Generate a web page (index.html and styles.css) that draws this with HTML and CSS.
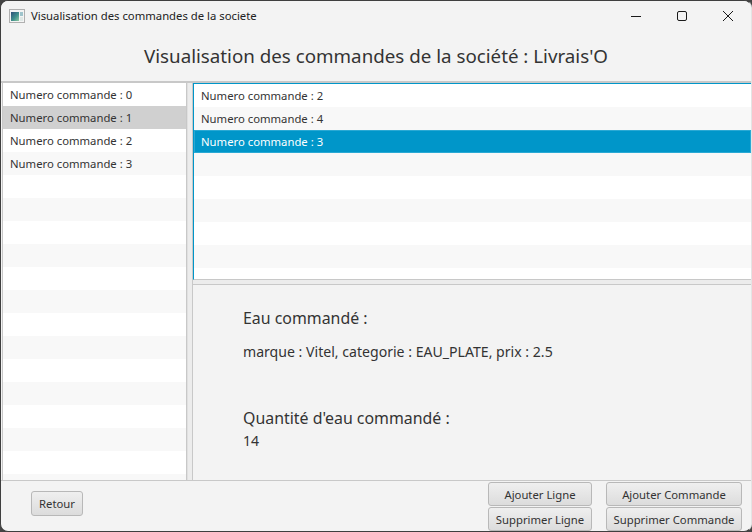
FILE: index.html
```html
<!DOCTYPE html>
<html>
<head>
    <link rel="stylesheet" href="styles.css">
</head>
<body>

<div class="window">
    <div class="titlebar">
        <svg class="app-icon" width="16" height="14" viewBox="0 0 16 14">
            <defs>
                <linearGradient id="iconFill" x1="0" y1="0" x2="1" y2="1">
                    <stop offset="0" stop-color="#2f4f78"/>
                    <stop offset="0.55" stop-color="#3f8f8c"/>
                    <stop offset="1" stop-color="#8fc9a0"/>
                </linearGradient>
            </defs>
            <rect x="0.5" y="0.5" width="15" height="13" fill="#f4f4f4" stroke="#b0b0b0"/>
            <rect x="2" y="3" width="8" height="9" fill="url(#iconFill)"/>
            <rect x="11" y="3" width="3" height="4" fill="#9fc4cc"/>
            <rect x="11" y="8" width="3" height="4" fill="#dfe8e6"/>
        </svg>
        <span class="window-title">Visualisation des commandes de la societe</span>
        <div class="window-buttons">
            <svg class="win-btn" width="46" height="30" viewBox="0 0 46 30"><path d="M18 15.5h10" stroke="#1a1a1a" fill="none"/></svg>
            <svg class="win-btn" width="46" height="30" viewBox="0 0 46 30"><rect x="18.5" y="10.5" width="9" height="9" rx="1.5" stroke="#1a1a1a" fill="none"/></svg>
            <svg class="win-btn" width="46" height="30" viewBox="0 0 46 30"><path d="M18 10l10 10M28 10l-10 10" stroke="#1a1a1a" fill="none"/></svg>
        </div>
    </div>

    <h1 class="heading">Visualisation des commandes de la société : Livrais'O</h1>

    <div class="main">
        <ul class="list list-left">
            <li>Numero commande : 0</li>
            <li class="selected-grey">Numero commande : 1</li>
            <li>Numero commande : 2</li>
            <li>Numero commande : 3</li>
            <li></li><li></li><li></li><li></li><li></li><li></li><li></li><li></li>
            <li></li><li></li><li></li><li></li><li></li><li></li>
        </ul>
        <div class="vsep"></div>
        <div class="right">
            <ul class="list list-right">
                <li>Numero commande : 2</li>
                <li>Numero commande : 4</li>
                <li class="selected-blue">Numero commande : 3</li>
                <li></li><li></li><li></li><li></li><li></li>
            </ul>
            <div class="hsep"></div>
            <div class="details">
                <p class="detail-title">Eau commandé :</p>
                <p class="detail-text">marque : Vitel, categorie : EAU_PLATE, prix : 2.5</p>
                <p class="detail-title qty-title">Quantité d'eau commandé :</p>
                <p class="detail-qty">14</p>
            </div>
        </div>
    </div>

    <div class="footer">
        <button class="btn btn-back">Retour</button>
        <div class="btn-col col-ligne">
            <button class="btn">Ajouter Ligne</button>
            <button class="btn">Supprimer Ligne</button>
        </div>
        <div class="btn-col col-commande">
            <button class="btn">Ajouter Commande</button>
            <button class="btn">Supprimer Commande</button>
        </div>
    </div>
</div>

</body>
</html>
```
FILE: styles.css
```css
html, body {
    margin: 0;
    height: 100%;
    background: #444;
}

body {
    font-family: "Noto Sans", "Open Sans", sans-serif;
    color: #333;
}

.window {
    width: 752px;
    height: 532px;
    box-sizing: border-box;
    display: flex;
    flex-direction: column;
    background: #f3f3f3;
    border-top: 1px solid #3f3f3f;
    border-left: 1px solid #3f3f3f;
    border-bottom: 1px solid #3f3f3f;
    border-right: 1px solid #e4e4e4;
    border-radius: 8px;
    overflow: hidden;
}

.titlebar {
    height: 30px;
    flex: none;
    display: flex;
    align-items: center;
    padding-left: 8px;
    background: #f3f3f3;
}

.app-icon {
    margin-right: 6px;
}

.window-title {
    font-size: 11.3px;
    color: #222;
    margin-top: -1px;
}

.window-buttons {
    margin-left: auto;
    display: flex;
}

.win-btn {
    display: block;
}

.heading {
    flex: none;
    height: 50px;
    margin: 0;
    font-size: 18.75px;
    font-weight: 400;
    line-height: 50px;
    text-align: center;
    color: #333;
    border-bottom: 2px solid #c8c8c8;
}

.main {
    flex: 1;
    min-height: 0;
    display: flex;
}

.list {
    list-style: none;
    margin: 0;
    padding: 0;
    background: #fff;
    overflow: hidden;
    font-size: 11.3px;
}

.list li {
    height: 23px;
    line-height: 23px;
    padding-left: 7px;
    background: #fff;
}

.list li:nth-child(even) {
    background: #f8f8f8;
}

.list-left {
    width: 183px;
    margin-left: 1px;
    flex: none;
    border-left: 1px solid #c8c8c8;
    border-right: 1px solid #c8c8c8;
}

.list .selected-grey,
.list .selected-grey:nth-child(even) {
    background: #d0d0d0;
}

.list .selected-blue {
    background: #0096c9;
    color: #fff;
    box-shadow: inset 0 0 0 1px #2aa9d4;
}

.vsep {
    width: 4px;
    flex: none;
    background: #ececec;
    border-left: 1px solid #e0e0e0;
    border-right: 1px solid #c8c8c8;
}

.right {
    flex: 1;
    min-width: 0;
    display: flex;
    flex-direction: column;
}

.list-right {
    height: 195px;
    flex: none;
    border-top: 1px solid #0096c9;
    border-left: 1px solid #0096c9;
    border-bottom: 1px solid #c8c8c8;
}

.hsep {
    height: 4px;
    flex: none;
    background: #ececec;
    border-bottom: 1px solid #c8c8c8;
}

.details {
    flex: 1;
    padding: 23px 0 0 50px;
}

.details p {
    margin: 0;
}

.detail-title {
    font-size: 15.9px;
    line-height: 20px;
}

.detail-text {
    font-size: 14.1px;
    line-height: 18px;
    margin-top: 15px !important;
}

.qty-title {
    margin-top: 47px !important;
}

.detail-qty {
    font-size: 14.1px;
    line-height: 20px;
    margin-top: 3px !important;
}

.footer {
    flex: none;
    height: 51px;
    box-sizing: border-box;
    display: flex;
    align-items: flex-start;
    border-top: 1px solid #c8c8c8;
}

.btn {
    font-family: inherit;
    font-size: 11.3px;
    color: #333;
    height: 24px;
    padding: 0;
    border: 1px solid #b8b8b8;
    border-radius: 3px;
    background: linear-gradient(#efefef, #dcdcdc);
}

.btn-back {
    width: 52px;
    height: 25px;
    margin-left: 30px;
    margin-top: 10px;
}

.btn-col {
    display: flex;
    flex-direction: column;
    gap: 1px;
    margin-top: 1px;
}

.col-ligne {
    width: 104px;
    margin-left: auto;
}

.col-commande {
    width: 136px;
    margin-left: 14px;
    margin-right: 9px;
}
```
